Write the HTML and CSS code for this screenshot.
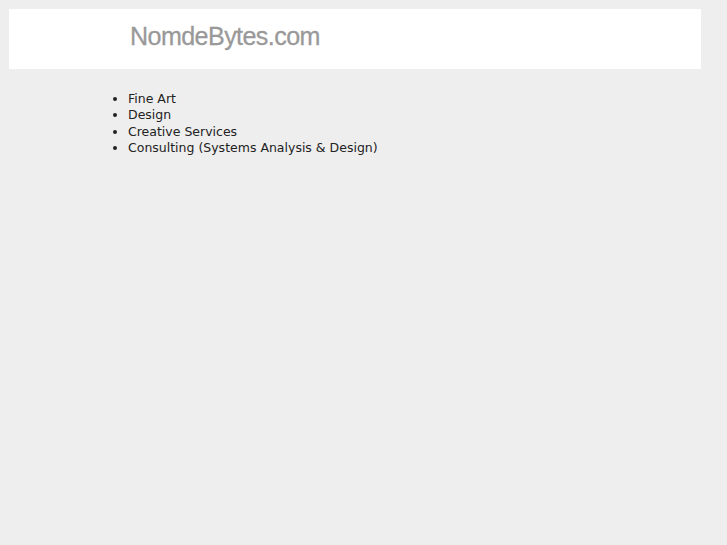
FILE: index.html
```html
<!DOCTYPE html>
<html lang="en">
<head>
    <meta charset="UTF-8">
    <title>NomdeBytes.com</title>
    <link rel="stylesheet" href="styles.css">
</head>
<body>
    <div class="header">
        <div class="logo">NomdeBytes.com</div>
    </div>
    <div class="content">
        <ul class="services">
            <li>Fine Art</li>
            <li>Design</li>
            <li>Creative Services</li>
            <li>Consulting (Systems Analysis &amp; Design)</li>
        </ul>
    </div>
</body>
</html>
```

FILE: styles.css
```css
* {
    box-sizing: border-box;
}

body {
    margin: 0;
    padding: 9px;
    background-color: #eeeeee;
    font-family: 'DejaVu Sans', sans-serif;
    font-size: 12.5px;
    color: #222222;
}

.header {
    width: 692px;
    height: 60px;
    background-color: #ffffff;
    padding: 12px 0 0 121px;
}

.logo {
    font-family: 'Liberation Sans', Arial, sans-serif;
    font-size: 26px;
    letter-spacing: -0.6px;
    color: #999999;
    transform: scaleX(0.965);
    transform-origin: left center;
    -webkit-text-stroke: 0.3px #999999;
}

.content {
    padding: 22px 0 0 79px;
}

.services {
    margin: 0;
    padding-left: 40px;
    line-height: 16.4px;
}
```
